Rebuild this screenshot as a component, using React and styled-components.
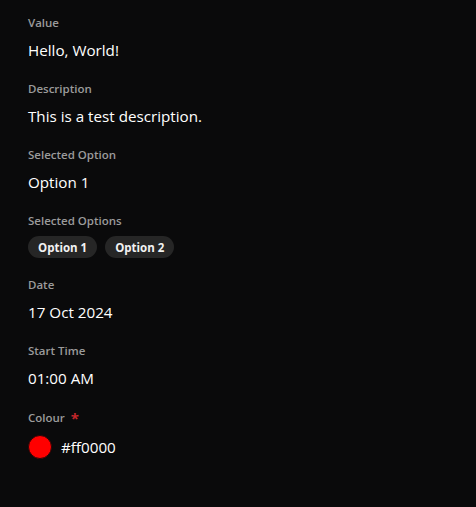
import styled, { createGlobalStyle } from "styled-components";

const GlobalStyle = createGlobalStyle`
  html, body {
    margin: 0;
    background: #0a0a0b;
    font-family: "Open Sans", "Noto Sans", sans-serif;
  }
`;

const Page = styled.div`
  min-height: 507px;
  padding: 15px 28px;
  box-sizing: border-box;
  background: #0a0a0b;
  display: flex;
  flex-direction: column;
  gap: 20px;
`;

const Field = styled.div`
  display: flex;
  flex-direction: column;
  gap: ${(p) => (p.$loose ? "9px" : "8px")};
  margin-top: ${(p) => (p.$loose ? "1px" : "0")};
`;

const Label = styled.div`
  display: flex;
  align-items: center;
  gap: 6px;
  font-size: 11.5px;
  font-weight: 600;
  line-height: 16px;
  color: #9b9b9b;
`;

const Required = styled.span`
  color: #c4262a;
  font-size: 15px;
  font-weight: 700;
  line-height: 16px;
`;

const Value = styled.div`
  font-size: 15.2px;
  line-height: 22px;
  color: #ffffff;
`;

const Pills = styled.div`
  display: flex;
  gap: 8px;
  margin-top: -1px;
  margin-bottom: -1px;
`;

const Pill = styled.span`
  display: inline-flex;
  align-items: center;
  height: 22px;
  padding: 0 10px;
  border-radius: 11px;
  background: #262626;
  color: #f2f2f2;
  font-size: 11.5px;
  font-weight: 700;
`;

const ColourRow = styled.div`
  display: flex;
  align-items: center;
  gap: 9px;
`;

const Swatch = styled.span`
  flex: none;
  width: 24px;
  height: 24px;
  border-radius: 50%;
  box-sizing: border-box;
  border: 1px solid #2a0606;
  background: ${(p) => p.$color};
`;

export default function App() {
  return (
    <>
      <GlobalStyle />
      <Page>
        <Field>
          <Label>Value</Label>
          <Value>Hello, World!</Value>
        </Field>
        <Field>
          <Label>Description</Label>
          <Value>This is a test description.</Value>
        </Field>
        <Field>
          <Label>Selected Option</Label>
          <Value>Option 1</Value>
        </Field>
        <Field>
          <Label>Selected Options</Label>
          <Pills>
            <Pill>Option 1</Pill>
            <Pill>Option 2</Pill>
          </Pills>
        </Field>
        <Field>
          <Label>Date</Label>
          <Value>17 Oct 2024</Value>
        </Field>
        <Field>
          <Label>Start Time</Label>
          <Value>01:00 AM</Value>
        </Field>
        <Field $loose>
          <Label>
            Colour <Required>*</Required>
          </Label>
          <ColourRow>
            <Swatch $color="#ff0000" />
            <Value>#ff0000</Value>
          </ColourRow>
        </Field>
      </Page>
    </>
  );
}
